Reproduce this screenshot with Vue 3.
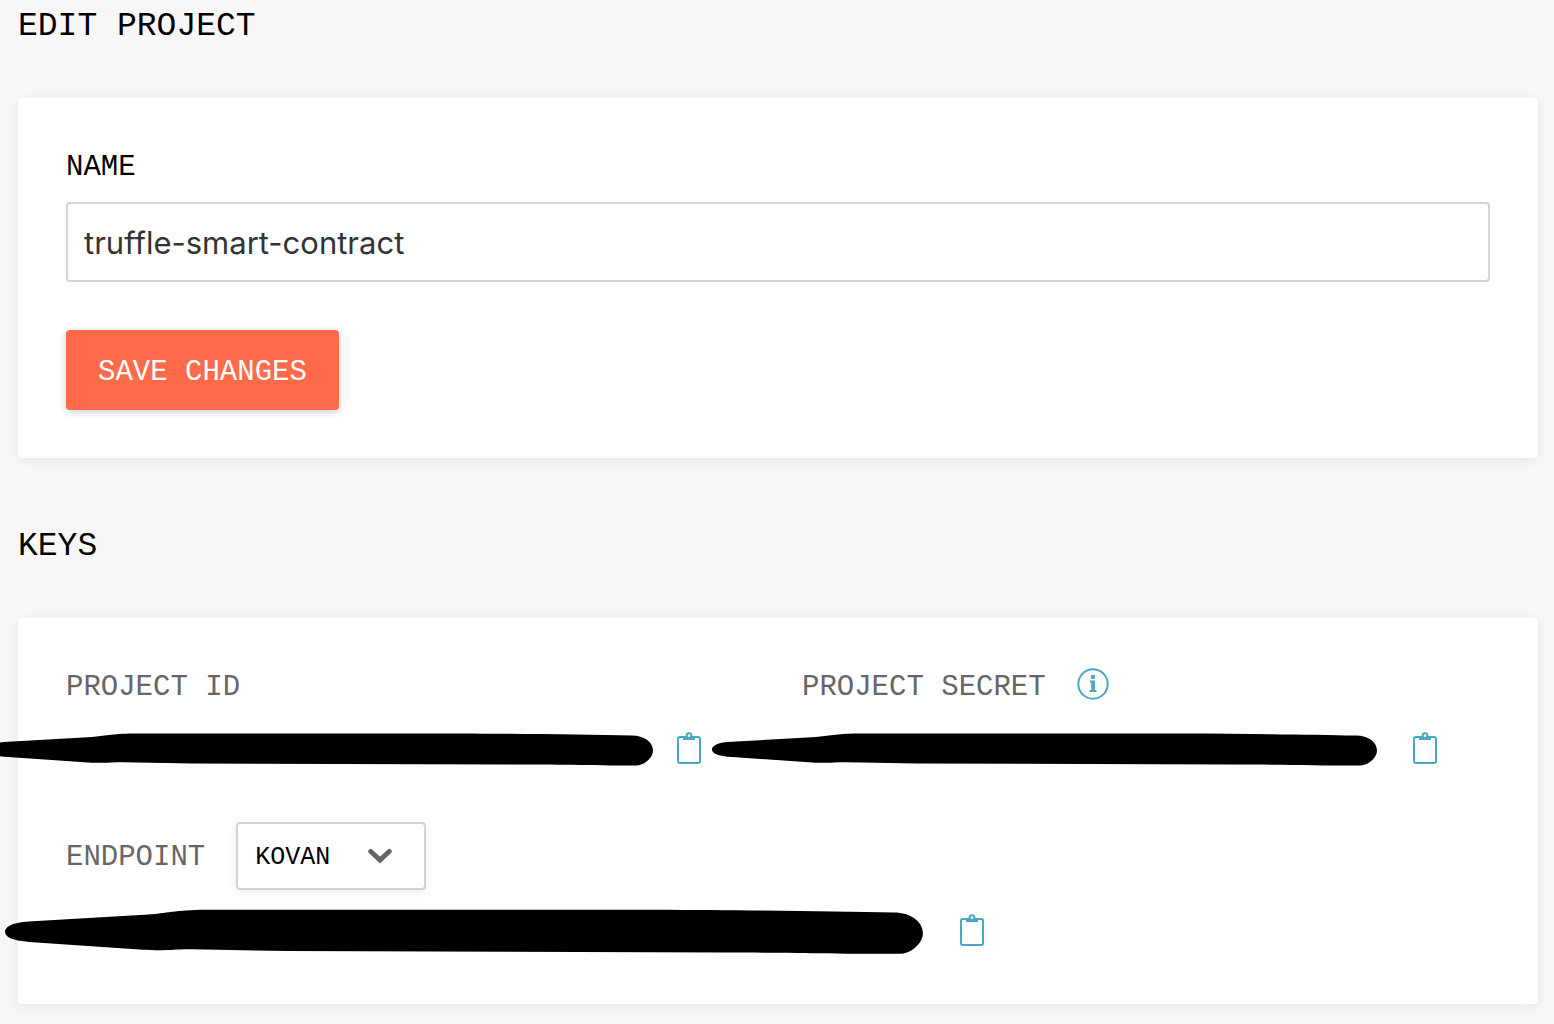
<template>
  <main class="page">
    <section class="section">
      <h1 class="section-title">EDIT PROJECT</h1>
      <form class="card" @submit.prevent>
        <label class="field-label" for="project-name">NAME</label>
        <input id="project-name" v-model="name" class="text-input" type="text" spellcheck="false" />
        <button class="btn-save" type="submit">SAVE CHANGES</button>
      </form>
    </section>

    <section class="section">
      <h2 class="section-title">KEYS</h2>
      <div class="card card-keys">
        <div class="key-columns">
          <div v-for="key in keys" :key="key.id" class="key">
            <div class="key-head">
              <h3 class="key-label">{{ key.label }}</h3>
              <button v-if="key.info" class="icon-btn" type="button" aria-label="About the project secret">
                <svg class="icon-info" viewBox="0 0 32 32">
                  <circle cx="16" cy="16" r="14.7" fill="none" stroke="currentColor" stroke-width="2" />
                  <rect x="14" y="7" width="4" height="4" rx="1" fill="currentColor" />
                  <path d="M13 12.500h5v9.500h1.500v2h-7v-2h1.700v-7.500h-1.200z" fill="currentColor" />
                </svg>
              </button>
            </div>
            <div class="value-row">
              <div class="value">
                <svg class="redaction" :class="'redaction-' + key.id" viewBox="0 0 665 33">
                  <path :d="strokePath" />
                </svg>
              </div>
              <button class="icon-btn" type="button" :aria-label="'Copy ' + key.id">
                <svg class="icon-clipboard" viewBox="0 0 24 32">
                  <rect x="1" y="5" width="22" height="26" rx="2" />
                  <path class="clip" d="M6 5h12v3H6z" />
                  <circle class="ring" cx="12" cy="3.6" r="2.4" />
                </svg>
              </button>
            </div>
          </div>
        </div>

        <div class="endpoint-head">
          <label class="key-label" for="endpoint">ENDPOINT</label>
          <div class="select-wrap">
            <select id="endpoint" v-model="endpoint" class="select">
              <option v-for="net in networks" :key="net" :value="net">{{ net }}</option>
            </select>
            <svg class="icon-chevron" viewBox="0 0 24 16">
              <path d="M2.800 3.500L12 12L21.200 3.500" />
            </svg>
          </div>
        </div>
        <div class="value-row value-row-endpoint">
          <div class="value">
            <svg class="redaction redaction-endpoint" viewBox="0 0 665 33">
              <path :d="strokePath" />
            </svg>
          </div>
          <button class="icon-btn" type="button" aria-label="Copy endpoint">
            <svg class="icon-clipboard" viewBox="0 0 24 32">
              <rect x="1" y="5" width="22" height="26" rx="2" />
              <path class="clip" d="M6 5h12v3H6z" />
              <circle class="ring" cx="12" cy="3.6" r="2.4" />
            </svg>
          </button>
        </div>
      </div>
    </section>
  </main>
</template>

<script setup>
import { ref } from 'vue'

const name = ref('truffle-smart-contract')
const endpoint = ref('KOVAN')
const networks = ['MAINNET', 'ROPSTEN', 'KOVAN', 'RINKEBY', 'GOERLI']

const keys = [
  { id: 'id', label: 'PROJECT ID', info: false },
  { id: 'secret', label: 'PROJECT SECRET', info: true },
]

// marker stroke that covers each value: thin tip on the left, round cap on the right
const strokePath =
  'M0 16.5C0 12.5 6 9.3 20 8.8L104 4C116 3 124 0.8 145 0.5L470 0.5C540 0.8 600 1.5 644 2.5C656 2.5 665 9 665 17.5' +
  'C665 25 656 32.5 648 32.5C600 32.500 570 31.5 520 31.5L205 30.5L135 29.2C122 29 118 30.5 100 29.5L20 24C6 23.3 0 20.5 0 16.5Z'
</script>

<style>
body {
  background: #f7f7f7;
}
</style>

<style scoped>
.page {
  padding: 2px 16px 20px 18px;
  font-family: 'Liberation Mono', monospace;
  color: #000;
}

.section + .section {
  margin-top: 64px;
}

.section-title {
  margin: 0 0 46px;
  font-size: 33px;
  font-weight: 400;
  line-height: 50px;
}

.card {
  padding: 48px;
  background: #fff;
  border-radius: 4px;
  box-shadow: 0 2px 12px rgba(0, 0, 0, 0.07);
}
.card-keys {
  padding-bottom: 54px;
}

.field-label {
  display: block;
  margin-bottom: 12px;
  font-size: 29px;
  line-height: 44px;
}

.text-input {
  display: block;
  box-sizing: border-box;
  width: 100%;
  height: 80px;
  margin-bottom: 48px;
  padding: 0 16px;
  border: 2px solid #d3d3d3;
  border-radius: 4px;
  background: #fff;
  color: #333;
  font-family: Inter, sans-serif;
  font-size: 31px;
  outline: none;
}

.btn-save {
  display: block;
  height: 80px;
  padding: 4px 32px 0;
  border: 0;
  border-radius: 4px;
  background: #ff6b4a;
  box-shadow: 0 2px 8px rgba(0, 0, 0, 0.2);
  color: #fff;
  font-family: inherit;
  font-size: 29px;
  cursor: pointer;
}

.key-columns {
  display: grid;
  grid-template-columns: 1fr 1fr;
  gap: 48px;
  margin-bottom: 54px;
}

.key-head {
  display: flex;
  align-items: flex-start;
  gap: 31px;
  height: 44px;
  margin-bottom: 18px;
}

.key-label {
  margin: 0;
  color: #666;
  font-size: 29px;
  font-weight: 400;
  line-height: 44px;
}

.icon-btn {
  display: flex;
  flex-shrink: 0;
  padding: 0;
  border: 0;
  background: none;
  color: #48a9c0;
  cursor: pointer;
}

.icon-info {
  width: 32px;
  height: 32px;
  margin-top: 2px;
}

.value-row {
  display: flex;
  align-items: center;
  height: 40px;
  padding-right: 53px;
}

.value {
  position: relative;
  flex: 1;
  align-self: stretch;
}
.value-row-endpoint .value {
  flex: 0 1 894px;
}

.redaction {
  position: absolute;
  top: 5px;
  width: 665px;
  fill: #000;
}
.redaction-id { left: -78px; }
.redaction-secret { left: -90px; }
.redaction-endpoint {
  top: -1px;
  left: -61px;
  width: 918px;
}

.icon-clipboard {
  width: 24px;
  height: 32px;
  overflow: visible;
  fill: none;
  stroke: currentColor;
  stroke-width: 2;
}
.icon-clipboard .clip {
  fill: currentColor;
  stroke: none;
}
.icon-clipboard .ring {
  fill: #fff;
}

.endpoint-head {
  display: flex;
  align-items: center;
  gap: 31px;
  margin-bottom: 20px;
}
.endpoint-head .key-label {
  padding-top: 4px;
}

.select-wrap {
  position: relative;
}

.select {
  box-sizing: border-box;
  display: block;
  width: 190px;
  height: 68px;
  padding: 2px 60px 0 17px;
  appearance: none;
  border: 2px solid #d3d3d3;
  border-radius: 4px;
  background: #fff;
  box-shadow: 0 2px 8px rgba(0, 0, 0, 0.08);
  color: #000;
  font-family: inherit;
  font-size: 25px;
}

.icon-chevron {
  position: absolute;
  top: 26px;
  right: 34px;
  width: 24px;
  height: 16px;
  fill: none;
  stroke: #666;
  stroke-width: 5;
  stroke-linecap: round;
  pointer-events: none;
}
</style>
